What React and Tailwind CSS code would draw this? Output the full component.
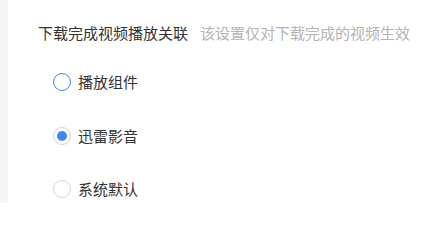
import React, { useState } from 'react'

const options = ['播放组件', '迅雷影音', '系统默认']

const Radio = ({ checked, hover }) => {
  if (checked) {
    return (
      <span className="w-[18px] h-[18px] rounded-full border border-[#d4d4d4] flex items-center justify-center bg-white">
        <span className="w-[10px] h-[10px] rounded-full bg-[#3f86ff]"></span>
      </span>
    )
  }
  return (
    <span
      className={`w-[18px] h-[18px] rounded-full border bg-white ${hover ? 'border-[#3f86ff]' : 'border-[#d4d4d4]'}`}
    ></span>
  )
}

const App = () => {
  const [selected, setSelected] = useState(1)

  return (
    <div className="flex w-[425px] h-[203px] bg-white overflow-hidden" style={{ fontFamily: '"Noto Sans CJK SC", "Noto Sans", sans-serif' }}>
      <div className="w-2 shrink-0 bg-[#f5f5f5]"></div>
      <div className="flex flex-col pl-[30px] pt-[23px]">
        <div className="flex items-center h-5 text-[15px] leading-5">
          <span className="text-[#333333]">下载完成视频播放关联</span>
          <span className="ml-3 text-[#b4b4b4]">该设置仅对下载完成的视频生效</span>
        </div>
        <div className="flex flex-col gap-[35.5px] mt-[30px] pl-[15px]">
          {options.map((item, index) => (
            <div
              key={index}
              onClick={() => setSelected(index)}
              className="flex items-center h-[18px] gap-[7px] cursor-pointer"
            >
              <Radio checked={selected === index} hover={index === 0} />
              <span className="text-[15px] leading-5 text-[#333333]">{item}</span>
            </div>
          ))}
        </div>
      </div>
    </div>
  )
}

export default App
